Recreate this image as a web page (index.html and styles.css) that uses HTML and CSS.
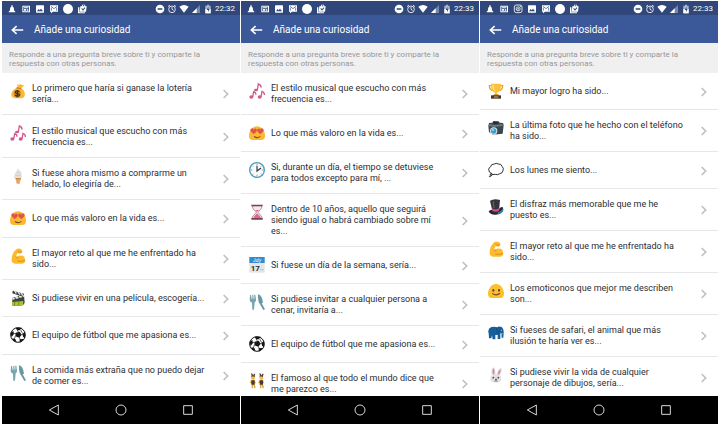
FILE: index.html
```html
<!DOCTYPE html>
<html lang="es">
<head>
<meta charset="utf-8">
<meta name="viewport" content="width=device-width, initial-scale=1">
<title>Añade una curiosidad</title>
<link rel="stylesheet" href="styles.css">
</head>
<body>
<svg class="sprite" aria-hidden="true">
  <symbol id="bell" viewBox="0 0 30 30"><path d="M13 4h4v4c4 2 4 6 4 11l4 4v2H5v-2l4-4c0-5 0-9 4-11z"/></symbol>
  <symbol id="news" viewBox="0 0 30 30"><path d="M4 5h23v20H4zM7 8v14h17V8z" fill-rule="evenodd"/><path d="M9 10h13v3H9zM9 15h6v5H9zM17 15h5v2h-5zM17 18h5v2h-5z"/></symbol>
  <symbol id="insta" viewBox="0 0 30 30"><g fill="none" stroke="currentColor" stroke-width="2.5"><rect x="4" y="3" width="23" height="23" rx="6"/><circle cx="15.500" cy="14.500" r="6"/><circle cx="15.500" cy="14.500" r="1.500"/></g><circle cx="22.500" cy="7.500" r="1.500"/></symbol>
  <symbol id="image" viewBox="0 0 30 30"><path d="M5 4h20q2 0 2 2v18q0 2-2 2H5q-2 0-2-2V6q0-2 2-2zM6 22h18l-6-8-4 5-3-4z" fill-rule="evenodd"/></symbol>
  <symbol id="mail" viewBox="0 0 30 30"><path d="M3 4h24v19H12l-6 5v-5H3z"/><path d="M6 7l9 7 9-7M7 20V11M23 20V11" fill="none" stroke="#2f477a" stroke-width="2"/></symbol>
  <symbol id="dot" viewBox="0 0 30 30"><circle cx="15" cy="15" r="15"/></symbol>
  <symbol id="bag" viewBox="0 0 30 30"><path d="M3 10h4v15h17v3H3zM10 7h4l2-5h8l1 5h4l-2 16H8zm7 0h5V4h-4zm-4 7l5 6 7-8-2-2-5 6-3-4z" fill-rule="evenodd"/></symbol>
  <symbol id="minus" viewBox="0 0 30 30"><path d="M15 2a13 13 0 1 1 0 26a13 13 0 0 1 0-26zM8 13v4h14v-4z" fill-rule="evenodd"/></symbol>
  <symbol id="alarm" viewBox="0 0 30 30"><g fill="none" stroke="currentColor" stroke-width="2.500"><circle cx="15" cy="16" r="10"/><path d="M15 9v7l5 3M3 8l6-5M27 8l-6-5"/></g></symbol>
  <symbol id="wifi" viewBox="0 0 30 30"><path d="M1 8Q15-2 29 8L15 26z"/></symbol>
  <symbol id="signal" viewBox="0 0 30 30"><path d="M27 3v24H3z" opacity=".35"/><path d="M17 13v14H3z"/></symbol>
  <symbol id="battery" viewBox="0 0 30 30"><path d="M12 2h6v3h5v23H7V5h5z" opacity=".6"/><path d="M7 15h16v13H7z"/><path d="M16 9l-5 9h4v6l5-9h-4z" fill="#2f477a"/></symbol>
  <symbol id="back" viewBox="0 0 36 30"><path d="M17 5L6 15l11 10M7 15h27" fill="none" stroke="currentColor" stroke-width="4"/></symbol>
  <symbol id="chevron" viewBox="0 0 24 36"><path d="M5 6l12 12L5 30" fill="none" stroke="currentColor" stroke-width="5"/></symbol>
  <symbol id="nav-back" viewBox="0 0 36 36"><path d="M31 3v30L4 18z" fill="none" stroke="currentColor" stroke-width="3"/></symbol>
  <symbol id="nav-home" viewBox="0 0 36 36"><circle cx="18" cy="18" r="15" fill="none" stroke="currentColor" stroke-width="3"/></symbol>
  <symbol id="nav-recent" viewBox="0 0 36 36"><path d="M5 5h26v26H5z" fill="none" stroke="currentColor" stroke-width="3"/></symbol>

  <symbol id="money" viewBox="0 0 48 48"><path d="M23 13L21 4l6 2 5-4 3 4 8 1-9 9c9 6 12 14 10 22-2 7-8 8-19 8S4 44 4 36c0-9 8-18 19-23z" fill="#f9b934"/><path d="M21 12l13 4-2 4-14-4z" fill="#d8851c"/><circle cx="22" cy="32" r="11" fill="#c98a1d"/><path d="M28 26q-10-5-12 1 0 4 6 5 7 1 6 5-3 5-13 0M23 21l-2 22" fill="none" stroke="#33302c" stroke-width="3.500"/></symbol>
  <symbol id="music" viewBox="0 0 48 48"><g fill="#cf5a8f"><ellipse cx="7" cy="42" rx="6" ry="5"/><ellipse cx="21" cy="21" rx="6" ry="4"/><ellipse cx="32" cy="42" rx="6" ry="5"/></g><path d="M11 42l3-16q7 2 7 9M25 21l3-18q9 3 8 11M36 42l3-17q8 3 7 11" fill="none" stroke="#cf5a8f" stroke-width="4"/></symbol>
  <symbol id="cone" viewBox="0 0 48 48"><path d="M16 28h17l-4 19h-9z" fill="#e5a865"/><path d="M14 30q-5-5 0-9-1-6 4-8 2-10 9-11 0 6 5 9 5 4 2 9 5 5 0 10z" fill="#e4e2de"/><path d="M16 22q9 4 18-3M20 13q5 3 11-2" fill="none" stroke="#c4c2bf" stroke-width="2"/><path d="M16 30h17v4H17z" fill="#cc8745"/></symbol>
  <symbol id="love" viewBox="0 0 48 48"><path d="M24 4C38 4 48 17 48 33q0 12-12 12H12Q0 45 0 33C0 17 10 4 24 4z" fill="#fcb930"/><path d="M14 28L5 19q-3-7 4-9 4 0 5 4 3-5 7-3 5 3 1 9zM34 28l-8-8q-4-6 1-9 4-2 7 3 1-4 5-4 7 2 4 9z" fill="#e0524e"/><path d="M15 34q9 8 19 0" fill="none" stroke="#7a4a2c" stroke-width="3.500"/></symbol>
  <symbol id="muscle" viewBox="0 0 48 48"><path d="M5 38C4 24 10 8 22 2q11-2 15 6 1 7-5 9l-10-1-4 10q16-7 25 0l3 14q-2 7-9 7H17Q6 46 5 38z" fill="#fcba2d"/><path d="M23 10q7 5 12 1M18 26q2 5 7 4M22 39q14 4 23-3" fill="none" stroke="#df8c20" stroke-width="3"/></symbol>
  <symbol id="clapper" viewBox="0 0 48 48"><path d="M8 2l34 9-2 10L7 10z" fill="#373933"/><path d="M14 3l5 8M24 6l6 8M33 9l6 8" stroke="#ddd" stroke-width="4"/><path d="M8 23l34-8 2 23-5 8-31 2-2-9z" fill="#3e443b"/><path d="M8 24l33-9 1 5L8 29z" fill="#f0f0e8"/><path d="M14 22l3 6M25 19l3 6M35 16l3 6" stroke="#333" stroke-width="3"/><path d="M6 36l34-3-1 13-32 2z" fill="#a5c533"/><path d="M15 35l-2 12M27 34l-1 12" stroke="#59731f" stroke-width="2"/></symbol>
  <symbol id="ball" viewBox="0 0 48 48"><circle cx="24" cy="24" r="22" fill="#fff" stroke="#171717" stroke-width="3"/><path d="M17 2h19l-7 8h-8zM17 17l12-3 6 9-7 9-12-4zM1 18l9-6 2 9-7 9zM45 14v20l-6-5-1-9zM7 34l9 2 4 10-10-5zM29 37l9-1 4 2-13 9z" fill="#171717"/><path d="M22 9l3 6M11 19l7 1M34 23h6M28 31l3 8M16 27l-3 9M38 20l-6-11" stroke="#171717" stroke-width="2"/></symbol>
  <symbol id="cutlery" viewBox="0 0 48 48"><path d="M3 3h3l2 11h2V2h3l1 12h2V2h3l2 14q1 7-4 9l-2 22h-5l-1-21q-6-1-7-7z" fill="#78a5ae"/><path d="M27 1q9 2 13 15l2 10-4 2 10 18-5 2-14-24q-3-10-2-23z" fill="#6898a4"/></symbol>
  <symbol id="clock" viewBox="0 0 48 48"><circle cx="24" cy="24" r="22" fill="#fafafa" stroke="#4b9ec0" stroke-width="4"/><path d="M24 5v5M24 38v5M5 24h5M38 24h5M10 11l3 3M38 11l-3 3M10 38l3-3M38 38l-3-3" stroke="#6b7780" stroke-width="2"/><path d="M24 11v16l12-9" fill="none" stroke="#30383e" stroke-width="3.500"/></symbol>
  <symbol id="hourglass" viewBox="0 0 48 48"><path d="M11 5h27v7L27 25l12 14v5H10v-5l12-14-11-13z" fill="#f5e9ed" stroke="#9b6267" stroke-width="2"/><path d="M19 18h11l-6 6zM24 28l11 11v4H14v-4z" fill="#e2649c"/><path d="M7 2h34v5H7zM7 42h34v5H7z" fill="#754746"/></symbol>
  <symbol id="bunnies" viewBox="0 0 48 48"><g id="bunny"><path d="M8 10L6 1l5 1 1 6 3-6 4 1-3 9z" fill="#51404d"/><circle cx="12" cy="15" r="6" fill="#f7bb3f"/><path d="M7 13q4-6 10 0v-5H7z" fill="#583928"/><path d="M6 22l-4 9 6-2v17h4V35l4 11 4-1-4-16 5 3-4-11z" fill="#e6a62f"/><path d="M7 22h10v13H7z" fill="#423a43"/></g><use href="#bunny" x="25"/></symbol>
  <symbol id="trophy" viewBox="0 0 48 48"><path d="M11 8H4q0 14 14 15M36 8h8q0 14-14 15" fill="none" stroke="#e4a52a" stroke-width="4"/><path d="M9 2h30q1 24-12 27v9h-6v-9Q8 26 9 2z" fill="#fbc338"/><path d="M15 6q0 13 5 18" stroke="#fff0a5" stroke-width="3" fill="none"/><path d="M18 34h13l3 5H14z" fill="#d38b22"/><path d="M9 37h30v10H9z" fill="#44372e"/><path d="M18 40h13v4H18z" fill="#bd9440"/></symbol>
  <symbol id="camera" viewBox="0 0 48 48"><path d="M3 9l10-1 3-5 16 1 3 4 10 1 2 6-3 26-30 3-11-8-2-19z" fill="#39484e"/><path d="M3 12l18 3 24-3-2 6-25 3-15-3z" fill="#68787d"/><path d="M15 6h15v6H17z" fill="#232d32"/><circle cx="17" cy="33" r="11" fill="#dce7eb"/><circle cx="17" cy="33" r="8" fill="#3b9dcc"/><circle cx="15" cy="30" r="3" fill="#9bdcf3"/></symbol>
  <symbol id="bubble" viewBox="0 0 48 48"><path d="M13 36Q1 31 2 22 3 16 8 14q1-8 11-8 5-4 12 0 9-1 11 7 6 5 3 13-1 8-10 9-5 5-13 2l-10 1q-1 5-8 6 4-3 3-8z" fill="#fff" stroke="#303133" stroke-width="3" stroke-linejoin="round"/></symbol>
  <symbol id="hat" viewBox="0 0 48 48"><path d="M2 37q5-6 13-4l17-2q7-9 12-7l2 8q-3 13-23 15Q6 48 2 37z" fill="#26292e"/><path d="M6 5q13-8 30-2l-3 31q-10 7-20 1z" fill="#34363b"/><path d="M12 28q11 7 22-1l-1 8q-9 6-20 1z" fill="#ce4f87"/><path d="M29 40q12-3 16-13l1 6q-4 10-17 12z" fill="#3488ad"/><path d="M16 7l2 20" stroke="#666a70" stroke-width="3"/></symbol>
  <symbol id="smile" viewBox="0 0 48 48"><path d="M24 3C38 3 48 17 48 33q0 12-12 12H12Q0 45 0 33C0 17 10 3 24 3z" fill="#fcc02e"/><ellipse cx="16" cy="22" rx="3" ry="4" fill="#5a4030"/><ellipse cx="33" cy="22" rx="3" ry="4" fill="#5a4030"/><path d="M13 31q11 9 23 0" fill="none" stroke="#6f4c27" stroke-width="3.500"/></symbol>
  <symbol id="elephant" viewBox="0 0 48 48"><path d="M4 10q10-7 23-3 6-5 14-1 7 5 6 17l-1 15h-5l-1-13-3 2v15h-8V30h-7v13h-8l-2-12-2 9H3l-1-15 1-9-2 7-3 1z" fill="#175f9a"/><path d="M26 9q-3 10 5 15 6-3 5-10" fill="none" stroke="#0c4777" stroke-width="2"/><circle cx="40" cy="16" r="1.500" fill="#eaf4fc"/><path d="M37 24q4 5 7 2" stroke="#e3e6e8" stroke-width="2" fill="none"/></symbol>
  <symbol id="rabbit" viewBox="0 0 48 48"><path d="M12 25Q7 7 16 1q7 2 6 22zM26 24Q28 6 39 3q6 5-4 24z" fill="#dedbdc"/><path d="M15 22q-3-13 2-18 3 5 2 18zM29 22q2-11 9-15 1 6-6 17z" fill="#e7799c"/><path d="M7 34q2-13 17-13t16 13q2 12-16 13Q6 47 7 34z" fill="#e2e1e1"/><circle cx="16" cy="32" r="2.500" fill="#444"/><circle cx="31" cy="32" r="2.500" fill="#444"/><path d="M21 36h6l-3 4zM19 43q5-1 5-4 0 3 5 4" fill="#735b60" stroke="#735b60" stroke-width="1.500"/></symbol>
</svg>

<main class="phones">
  <section class="phone">
    <div class="status">
      <svg class="tray"><use href="#bell"/></svg><svg class="tray"><use href="#news"/></svg><svg class="tray"><use href="#image"/></svg><svg class="tray"><use href="#mail"/></svg><svg class="tray"><use href="#dot"/></svg><svg class="tray"><use href="#bag"/></svg>
      <div class="system"><svg><use href="#minus"/></svg><svg><use href="#alarm"/></svg><svg><use href="#wifi"/></svg><svg><use href="#signal"/></svg><svg><use href="#battery"/></svg><time>22:32</time></div>
    </div>
    <header class="bar"><button class="back" aria-label="Atrás"><svg><use href="#back"/></svg></button><h1>Añade una curiosidad</h1></header>
    <p class="intro">Responde a una pregunta breve sobre ti y comparte la respuesta con otras personas.</p>
    <ul class="list">
      <li><a href="#"><svg class="emoji"><use href="#money"/></svg><span>Lo primero que haría si ganase la lotería sería...</span><svg class="chevron"><use href="#chevron"/></svg></a></li>
      <li><a href="#"><svg class="emoji"><use href="#music"/></svg><span>El estilo musical que escucho con más frecuencia es...</span><svg class="chevron"><use href="#chevron"/></svg></a></li>
      <li><a href="#"><svg class="emoji"><use href="#cone"/></svg><span>Si fuese ahora mismo a comprarme un helado, lo elegiría de...</span><svg class="chevron"><use href="#chevron"/></svg></a></li>
      <li><a href="#"><svg class="emoji"><use href="#love"/></svg><span>Lo que más valoro en la vida es...</span><svg class="chevron"><use href="#chevron"/></svg></a></li>
      <li><a href="#"><svg class="emoji"><use href="#muscle"/></svg><span>El mayor reto al que me he enfrentado ha sido...</span><svg class="chevron"><use href="#chevron"/></svg></a></li>
      <li><a href="#"><svg class="emoji"><use href="#clapper"/></svg><span>Si pudiese vivir en una película, escogería...</span><svg class="chevron"><use href="#chevron"/></svg></a></li>
      <li><a href="#"><svg class="emoji"><use href="#ball"/></svg><span>El equipo de fútbol que me apasiona es...</span><svg class="chevron"><use href="#chevron"/></svg></a></li>
      <li><a href="#"><svg class="emoji"><use href="#cutlery"/></svg><span>La comida más extraña que no puedo dejar de comer es...</span><svg class="chevron"><use href="#chevron"/></svg></a></li>
    </ul>
    <nav class="nav"><button aria-label="Volver"><svg><use href="#nav-back"/></svg></button><button aria-label="Inicio"><svg><use href="#nav-home"/></svg></button><button aria-label="Recientes"><svg><use href="#nav-recent"/></svg></button></nav>
  </section>

  <section class="phone">
    <div class="status">
      <svg class="tray"><use href="#bell"/></svg><svg class="tray"><use href="#news"/></svg><svg class="tray"><use href="#image"/></svg><svg class="tray"><use href="#mail"/></svg><svg class="tray"><use href="#dot"/></svg><svg class="tray"><use href="#bag"/></svg>
      <div class="system"><svg><use href="#minus"/></svg><svg><use href="#alarm"/></svg><svg><use href="#wifi"/></svg><svg><use href="#signal"/></svg><svg><use href="#battery"/></svg><time>22:33</time></div>
    </div>
    <header class="bar"><button class="back" aria-label="Atrás"><svg><use href="#back"/></svg></button><h1>Añade una curiosidad</h1></header>
    <p class="intro">Responde a una pregunta breve sobre ti y comparte la respuesta con otras personas.</p>
    <ul class="list">
      <li><a href="#"><svg class="emoji"><use href="#music"/></svg><span>El estilo musical que escucho con más frecuencia es...</span><svg class="chevron"><use href="#chevron"/></svg></a></li>
      <li><a href="#"><svg class="emoji"><use href="#love"/></svg><span>Lo que más valoro en la vida es...</span><svg class="chevron"><use href="#chevron"/></svg></a></li>
      <li><a href="#"><svg class="emoji"><use href="#clock"/></svg><span>Si, durante un día, el tiempo se detuviese para todos excepto para mí, ...</span><svg class="chevron"><use href="#chevron"/></svg></a></li>
      <li><a href="#"><svg class="emoji"><use href="#hourglass"/></svg><span>Dentro de 10 años, aquello que seguirá siendo igual o habrá cambiado sobre mí es...</span><svg class="chevron"><use href="#chevron"/></svg></a></li>
      <li><a href="#"><svg class="emoji" viewBox="0 0 48 48"><path d="M1 0h46v47H1z" fill="#e3e5e7"/><path d="M1 0h46v18H1z" fill="#348bd0"/><text x="24" y="14" class="cal-month">July</text><text x="19" y="41" class="cal-day">17</text><path d="M34 38h3M40 38h3" stroke="#a1a5a8" stroke-width="3"/></svg><span>Si fuese un día de la semana, sería...</span><svg class="chevron"><use href="#chevron"/></svg></a></li>
      <li><a href="#"><svg class="emoji"><use href="#cutlery"/></svg><span>Si pudiese invitar a cualquier persona a cenar, invitaría a...</span><svg class="chevron"><use href="#chevron"/></svg></a></li>
      <li><a href="#"><svg class="emoji"><use href="#ball"/></svg><span>El equipo de fútbol que me apasiona es...</span><svg class="chevron"><use href="#chevron"/></svg></a></li>
      <li><a href="#"><svg class="emoji"><use href="#bunnies"/></svg><span>El famoso al que todo el mundo dice que me parezco es...</span><svg class="chevron"><use href="#chevron"/></svg></a></li>
    </ul>
    <nav class="nav"><button aria-label="Volver"><svg><use href="#nav-back"/></svg></button><button aria-label="Inicio"><svg><use href="#nav-home"/></svg></button><button aria-label="Recientes"><svg><use href="#nav-recent"/></svg></button></nav>
  </section>

  <section class="phone">
    <div class="status">
      <svg class="tray"><use href="#bell"/></svg><svg class="tray"><use href="#news"/></svg><svg class="tray"><use href="#insta"/></svg><svg class="tray"><use href="#image"/></svg><svg class="tray"><use href="#mail"/></svg><svg class="tray"><use href="#dot"/></svg><svg class="tray"><use href="#bag"/></svg>
      <div class="system"><svg><use href="#minus"/></svg><svg><use href="#alarm"/></svg><svg><use href="#wifi"/></svg><svg><use href="#signal"/></svg><svg><use href="#battery"/></svg><time>22:33</time></div>
    </div>
    <header class="bar"><button class="back" aria-label="Atrás"><svg><use href="#back"/></svg></button><h1>Añade una curiosidad</h1></header>
    <p class="intro">Responde a una pregunta breve sobre ti y comparte la respuesta con otras personas.</p>
    <ul class="list">
      <li><a href="#"><svg class="emoji"><use href="#trophy"/></svg><span>Mi mayor logro ha sido...</span><svg class="chevron"><use href="#chevron"/></svg></a></li>
      <li><a href="#"><svg class="emoji"><use href="#camera"/></svg><span>La última foto que he hecho con el teléfono ha sido...</span><svg class="chevron"><use href="#chevron"/></svg></a></li>
      <li><a href="#"><svg class="emoji"><use href="#bubble"/></svg><span>Los lunes me siento...</span><svg class="chevron"><use href="#chevron"/></svg></a></li>
      <li><a href="#"><svg class="emoji"><use href="#hat"/></svg><span>El disfraz más memorable que me he puesto es...</span><svg class="chevron"><use href="#chevron"/></svg></a></li>
      <li><a href="#"><svg class="emoji"><use href="#muscle"/></svg><span>El mayor reto al que me he enfrentado ha sido...</span><svg class="chevron"><use href="#chevron"/></svg></a></li>
      <li><a href="#"><svg class="emoji"><use href="#smile"/></svg><span>Los emoticonos que mejor me describen son...</span><svg class="chevron"><use href="#chevron"/></svg></a></li>
      <li><a href="#"><svg class="emoji"><use href="#elephant"/></svg><span>Si fueses de safari, el animal que más ilusión te haría ver es...</span><svg class="chevron"><use href="#chevron"/></svg></a></li>
      <li><a href="#"><svg class="emoji"><use href="#rabbit"/></svg><span>Si pudiese vivir la vida de cualquier personaje de dibujos, sería...</span><svg class="chevron"><use href="#chevron"/></svg></a></li>
    </ul>
    <nav class="nav"><button aria-label="Volver"><svg><use href="#nav-back"/></svg></button><button aria-label="Inicio"><svg><use href="#nav-home"/></svg></button><button aria-label="Recientes"><svg><use href="#nav-recent"/></svg></button></nav>
  </section>
</main>
</body>
</html>
```

FILE: styles.css
```css
* {
  box-sizing: border-box;
}

body {
  margin: 0;
  background: #fff;
  font-family: Roboto, "Liberation Sans", sans-serif;
}

.sprite {
  position: absolute;
  width: 0;
  height: 0;
}

svg {
  display: block;
  flex: none;
  fill: currentColor;
}

button {
  display: block;
  padding: 0;
  border: 0;
  background: none;
  color: inherit;
}

.phones {
  display: grid;
  grid-template-columns: repeat(3, 1fr);
  gap: 1px;
  height: 100vh;
  padding: 1px 2px 2px;
}

.phone {
  display: flex;
  flex-direction: column;
  min-width: 0;
  min-height: 0;
}

.status {
  display: flex;
  flex: none;
  align-items: center;
  gap: 4px;
  height: 14px;
  padding: 1px 5px 0;
  background: #2f477a;
  color: #fff;
}

.status svg {
  width: 10px;
  height: 10px;
}

.system {
  display: flex;
  align-items: center;
  gap: 2px;
  margin-left: auto;
}

.system time {
  font-size: 8px;
  line-height: 10px;
}

.bar {
  display: flex;
  flex: none;
  align-items: center;
  gap: 10px;
  height: 28px;
  padding: 1px 8px 0;
  background: #3b5998;
  color: #fff;
}

.back svg {
  width: 14px;
  height: 12px;
}

.bar h1 {
  margin: 0;
  font-size: 10px;
  font-weight: 400;
  line-height: 14px;
}

.intro {
  flex: none;
  margin: 0;
  padding: 7px 24px 5px 7px;
  background: #f0f0f0;
  color: #97979b;
  font-size: 8px;
  line-height: 9px;
}

.list {
  display: flex;
  flex: 1;
  flex-direction: column;
  min-height: 0;
  margin: 0;
  padding: 0;
  overflow: hidden;
  list-style: none;
}

.list li {
  flex: 1 0 auto;
  display: flex;
  border-bottom: 1px solid #e6e7e9;
}

.list li:last-child {
  border-bottom: 0;
}

.list a {
  display: flex;
  flex: 1;
  align-items: center;
  gap: 6px;
  min-height: 36px;
  padding: 10px 8px 9px;
  color: #2b2d33;
  font-size: 9px;
  line-height: 11px;
  text-decoration: none;
}

.list span {
  flex: 1;
  margin-right: 9px;
}

.emoji {
  align-self: flex-start;
  width: 16px;
  height: 16px;
}

.chevron {
  width: 8px;
  height: 12px;
  margin-right: 2px;
  color: #bdc1c7;
}

.cal-month {
  fill: #fff;
  font-size: 14px;
  font-style: italic;
  text-anchor: middle;
}

.cal-day {
  fill: #292d31;
  font-size: 24px;
  font-weight: 700;
  text-anchor: middle;
}

.nav {
  display: flex;
  flex: none;
  align-items: center;
  justify-content: center;
  gap: 55px;
  height: 28px;
  background: #000;
  color: #d8d8d8;
}

.nav svg {
  width: 12px;
  height: 12px;
}
```
